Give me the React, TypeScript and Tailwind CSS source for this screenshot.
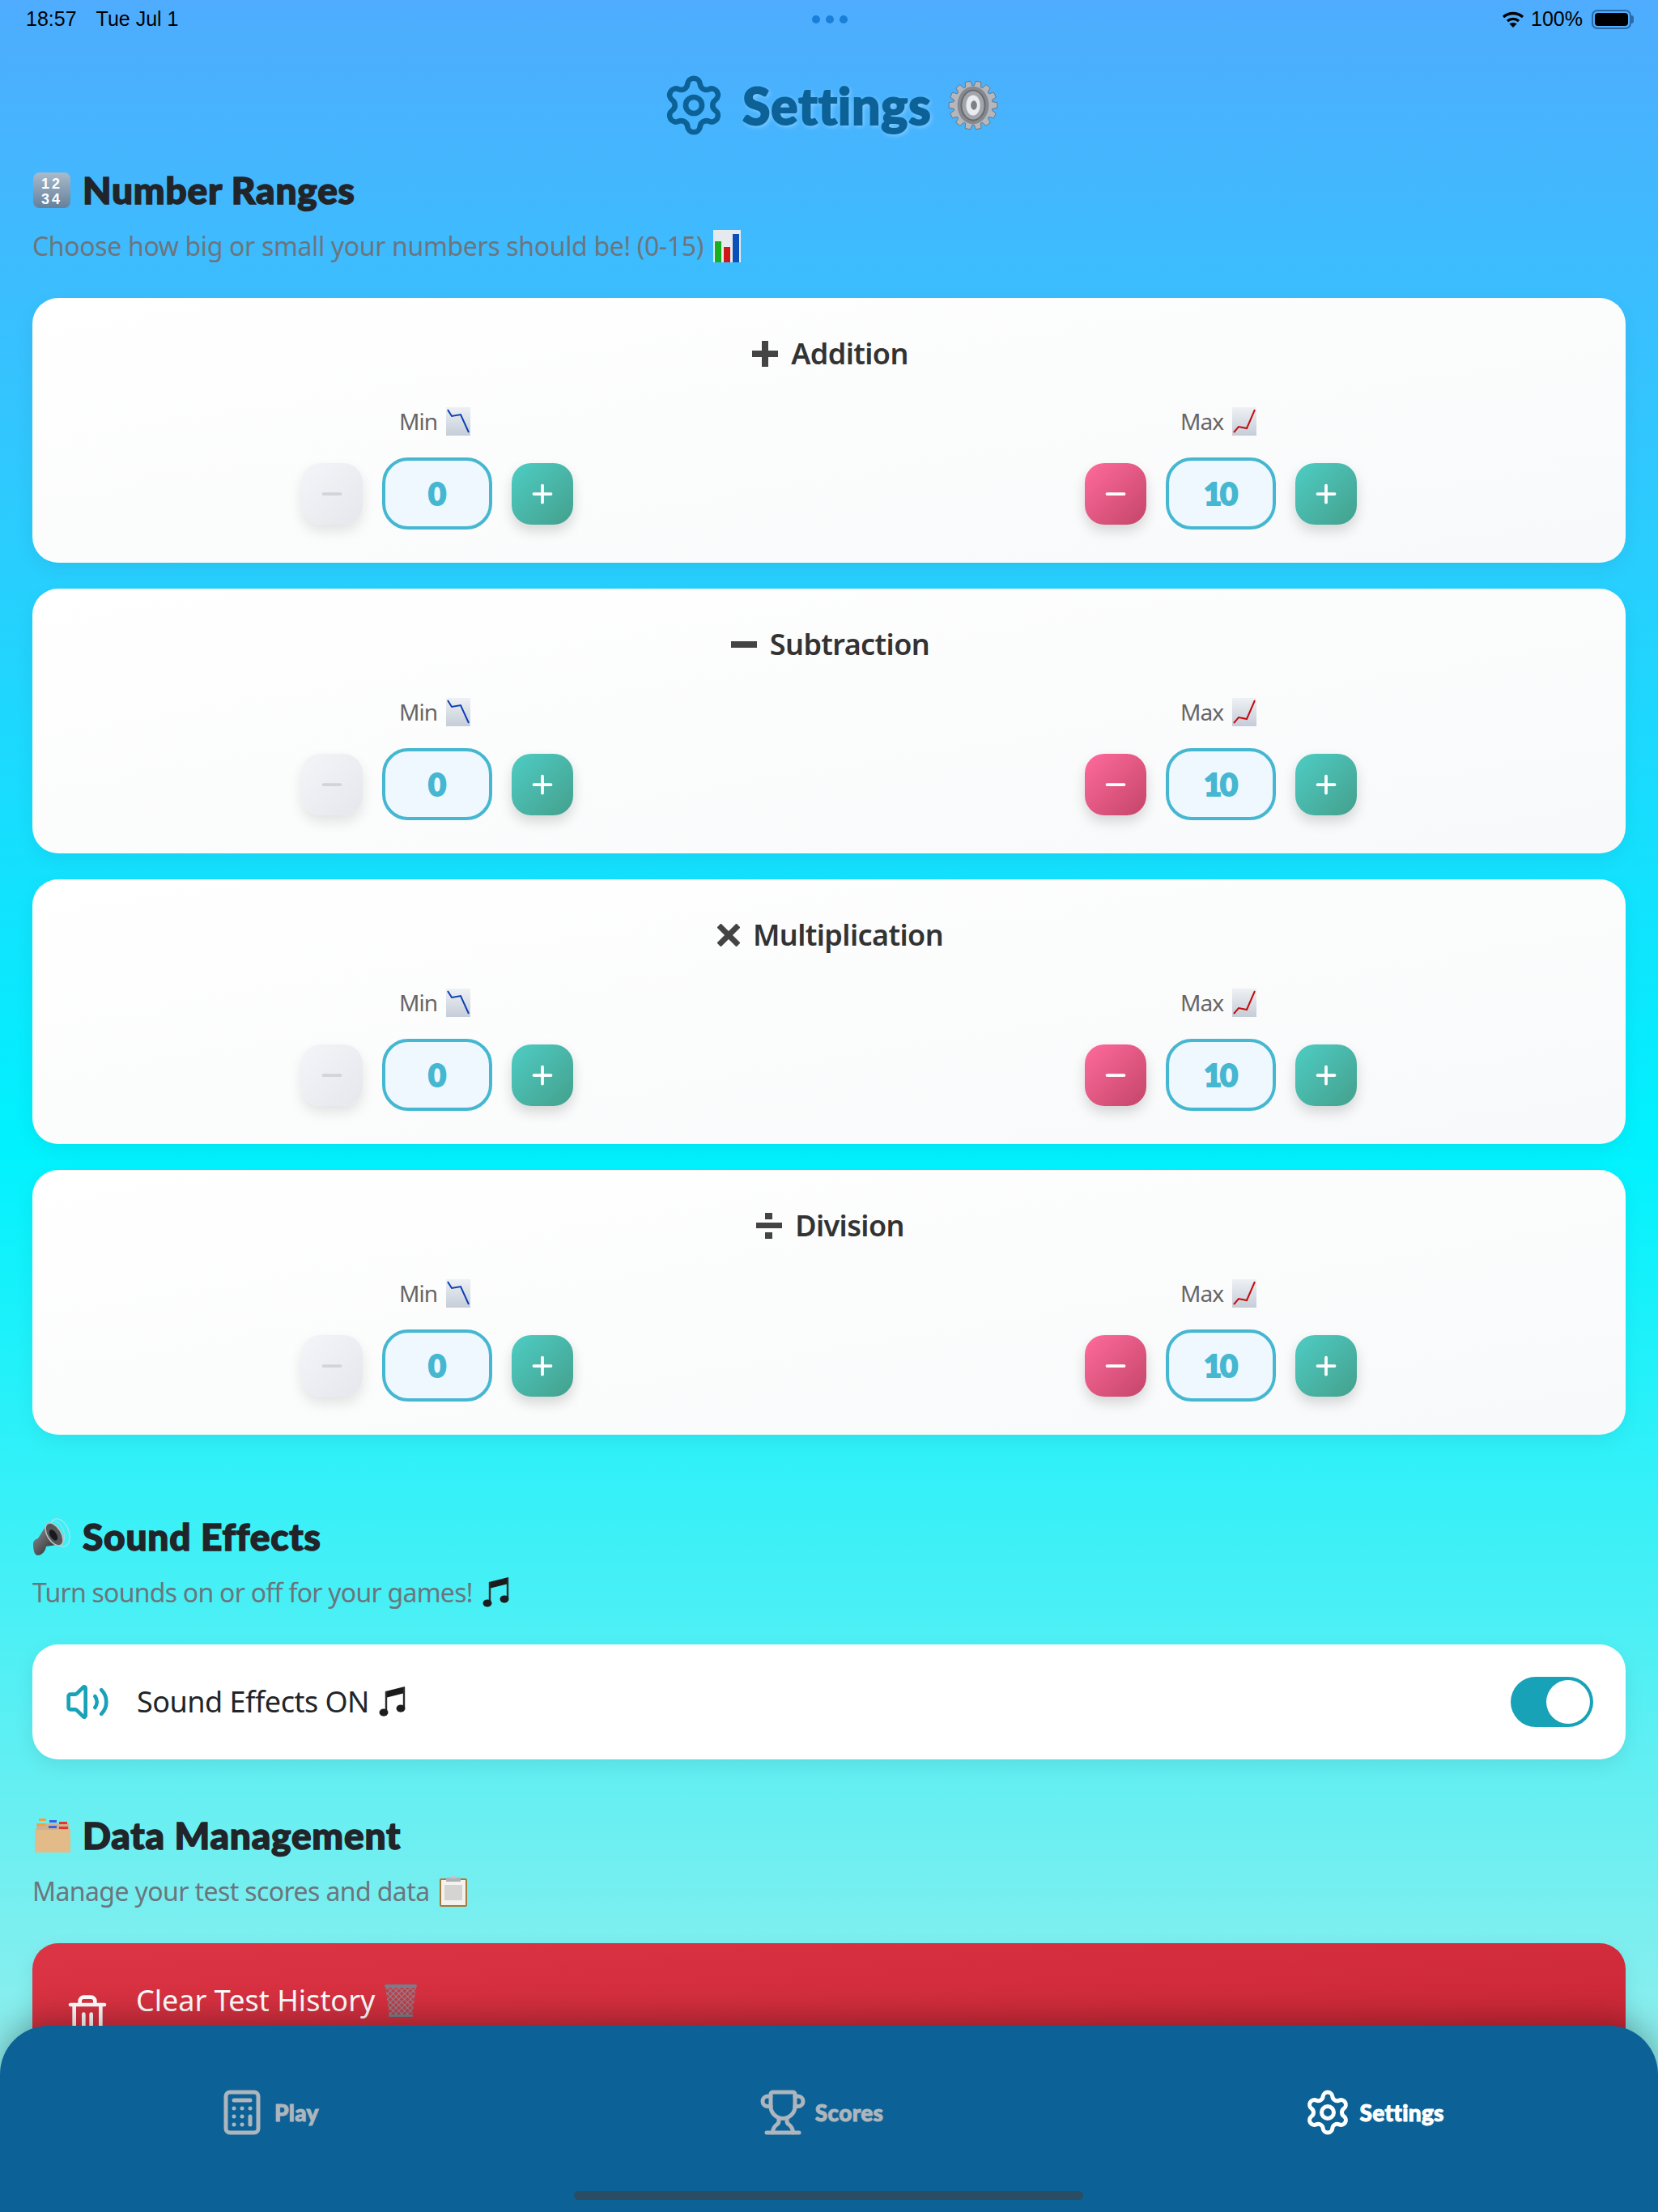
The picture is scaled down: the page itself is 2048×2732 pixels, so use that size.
import React from 'react';
import { Calculator, Minus, Plus, Settings, Trash2, Trophy, Volume2 } from 'lucide-react';

const headingFont = "font-['Lato','Inter',sans-serif] font-black";
const bodyFont = "font-['Noto_Sans','Open_Sans',sans-serif]";

// hand drawn stand-ins for the Apple emoji, there is no emoji font here
const KeycapEmoji = () => (
  <svg width="48" height="46" viewBox="0 0 48 46">
    <defs>
      <linearGradient id="keycap" x1="0" y1="0" x2="0" y2="1">
        <stop offset="0" stopColor="#a9bacb" />
        <stop offset="1" stopColor="#64809c" />
      </linearGradient>
    </defs>
    <rect x="1" y="1" width="46" height="44" rx="8" fill="url(#keycap)" />
    <text x="24" y="21" textAnchor="middle" fontSize="18" fill="#fff" letterSpacing="3" fontFamily="Liberation Sans">12</text>
    <text x="24" y="40" textAnchor="middle" fontSize="18" fill="#fff" letterSpacing="3" fontFamily="Liberation Sans">34</text>
  </svg>
);

const BarChartEmoji = () => (
  <svg width="34" height="40" viewBox="0 0 34 40">
    <rect width="34" height="40" fill="#e6eaee" />
    <rect x="2" y="14" width="8" height="26" fill="#17b01e" />
    <rect x="13" y="21" width="8" height="19" fill="#d01818" />
    <rect x="24" y="5" width="8" height="35" fill="#0b4fb8" />
  </svg>
);

const gearPoints = Array.from({ length: 14 }, (_, i) => {
  const a = (i / 14) * Math.PI * 2;
  const w = 0.11;
  const p = (r: number, t: number) => `${(32 + r * Math.cos(t)).toFixed(1)},${(32 + r * Math.sin(t)).toFixed(1)}`;
  return [p(25, a - w * 1.6), p(31, a - w), p(31, a + w), p(25, a + w * 1.6)].join(' ');
}).join(' ');

const GearEmoji = () => (
  <svg width="62" height="64" viewBox="0 0 64 64">
    <polygon points={gearPoints} fill="#b4b8be" stroke="#6a6560" strokeWidth="0.8" />
    <ellipse cx="32" cy="32" rx="20" ry="24" fill="#85888e" />
    <ellipse cx="32" cy="32" rx="15" ry="19" fill="#a2a5aa" stroke="#66696e" strokeWidth="2" />
    <ellipse cx="32" cy="32" rx="9" ry="13" fill="#e8ecf0" />
    <ellipse cx="33" cy="32" rx="4" ry="6" fill="#7f7f86" />
  </svg>
);

const ChartDownEmoji = () => (
  <svg width="30" height="35" viewBox="0 0 30 35">
    <defs>
      <linearGradient id="chartDown" x1="0" y1="0" x2="0" y2="1">
        <stop offset="0" stopColor="#eef1f4" />
        <stop offset="1" stopColor="#c5cdd8" />
      </linearGradient>
    </defs>
    <rect width="30" height="35" fill="url(#chartDown)" />
    <path d="M2 3 L7 11 L18 9 L28 31" fill="none" stroke="#0b3fb5" strokeWidth="2" />
  </svg>
);

const ChartUpEmoji = () => (
  <svg width="30" height="35" viewBox="0 0 30 35">
    <defs>
      <linearGradient id="chartUp" x1="0" y1="0" x2="0" y2="1">
        <stop offset="0" stopColor="#eef1f4" />
        <stop offset="1" stopColor="#c5cdd8" />
      </linearGradient>
    </defs>
    <rect width="30" height="35" fill="url(#chartUp)" />
    <path d="M2 31 L8 24 L18 26 L28 3" fill="none" stroke="#c40c0c" strokeWidth="2" />
  </svg>
);

const SpeakerEmoji = () => (
  <svg width="48" height="48" viewBox="0 0 48 48">
    <defs>
      <linearGradient id="speaker" x1="0" y1="0" x2="1" y2="1">
        <stop offset="0" stopColor="#9a9da0" />
        <stop offset="1" stopColor="#141517" />
      </linearGradient>
    </defs>
    <ellipse cx="30" cy="19" rx="9" ry="15" transform="rotate(-20 30 19)" fill="none" stroke="#a4dbe2" strokeWidth="1" />
    <ellipse cx="34" cy="19" rx="11" ry="18" transform="rotate(-20 34 19)" fill="none" stroke="#b6e4e9" strokeWidth="1" />
    <path d="M1 33 C1 29 4 27 7 26 L19 7 L36 33 L17 36 C16 42 12 47 6 47 C2 46 1 39 1 33 Z" fill="url(#speaker)" />
    <ellipse cx="27" cy="21" rx="8.5" ry="15.5" transform="rotate(-32 27 21)" fill="#55585b" stroke="#c0c3c6" strokeWidth="1.5" />
    <ellipse cx="26" cy="22" rx="4" ry="7.5" transform="rotate(-32 26 22)" fill="#191a1e" />
  </svg>
);

const NotesEmoji = ({ size = 34 }: { size?: number }) => (
  <svg width={size} height={size * 1.15} viewBox="0 0 34 39">
    <path d="M8 7 L32 1 L32 9 L8 15 Z" fill="#1c1a1c" />
    <path d="M9 7 L9 32 M31 2 L31 27" stroke="#2b2a2c" strokeWidth="2.4" fill="none" />
    <ellipse cx="6" cy="33" rx="5.5" ry="4.6" fill="#1d1c1f" />
    <ellipse cx="27" cy="28" rx="5.5" ry="4.6" fill="#1d1c1f" />
  </svg>
);

const FileBoxEmoji = () => (
  <svg width="48" height="42" viewBox="-3 0 48 42">
    <rect x="0" y="13" width="44" height="29" fill="#e2bb88" />
    <rect x="2" y="6" width="40" height="8" fill="#cdb190" />
    <rect x="5" y="0" width="9" height="3" fill="#f2a23c" />
    <rect x="18" y="2" width="9" height="3" fill="#3d5ee0" />
    <rect x="30" y="4" width="10" height="3" fill="#e8352c" />
    <rect x="3" y="6" width="10" height="3" fill="#f2a23c" />
    <rect x="17" y="9" width="10" height="3" fill="#3d5ee0" />
    <rect x="30" y="10" width="11" height="3" fill="#e8352c" />
  </svg>
);

const ClipboardEmoji = () => (
  <svg width="34" height="38" viewBox="0 0 34 38">
    <rect x="0" y="3" width="34" height="35" rx="2" fill="#a67a38" />
    <rect x="2" y="5" width="30" height="31" fill="#f4f2ee" />
    <rect x="6" y="11" width="22" height="19" fill="#d6d4d2" />
    <rect x="8" y="2" width="18" height="5" fill="#aeb2b8" />
    <rect x="14" y="0" width="6" height="3" fill="#c2c5ca" />
  </svg>
);

const WastebasketEmoji = () => (
  <svg width="40" height="40" viewBox="0 0 40 40">
    <defs>
      <pattern id="mesh" width="5" height="5" patternUnits="userSpaceOnUse" patternTransform="rotate(45)">
        <rect width="5" height="5" fill="#b9434f" />
        <path d="M0 0 H5 M0 0 V5" stroke="#8f9aa6" strokeWidth="1.4" />
      </pattern>
    </defs>
    <path d="M1 3 H39 L34 39 H6 Z" fill="url(#mesh)" />
    <rect x="0" y="0" width="40" height="4" rx="2" fill="#75808c" />
    <rect x="5" y="37" width="30" height="3" rx="1.5" fill="#75808c" />
  </svg>
);

const PlusGlyph = () => (
  <svg width="32" height="32" viewBox="0 0 32 32" fill="#444">
    <rect x="12" y="0" width="8" height="32" />
    <rect x="0" y="12" width="32" height="8" />
  </svg>
);

const MinusGlyph = () => (
  <svg width="32" height="32" viewBox="0 0 32 32" fill="#444">
    <rect x="0" y="12" width="32" height="8" />
  </svg>
);

const TimesGlyph = () => (
  <svg width="28" height="28" viewBox="0 0 28 28" fill="#444">
    <rect x="10.5" y="-3" width="7" height="34" transform="rotate(45 14 14)" />
    <rect x="10.5" y="-3" width="7" height="34" transform="rotate(-45 14 14)" />
  </svg>
);

const DivideGlyph = () => (
  <svg width="32" height="32" viewBox="0 0 32 32" fill="#444">
    <rect x="11" y="0" width="9" height="8" />
    <rect x="0" y="12" width="32" height="7" />
    <rect x="11" y="24" width="9" height="8" />
  </svg>
);

const WifiIcon = () => (
  <svg width="28" height="20" viewBox="0 0 28 20" fill="none" stroke="#000" strokeWidth="3.4">
    <path d="M2 7 C9 1 19 1 26 7" />
    <path d="M7 12 C11 8.5 17 8.5 21 12" />
    <path d="M14 20 L9.5 15.5 C12 13.5 16 13.5 18.5 15.5 Z" fill="#000" stroke="none" />
  </svg>
);

const Stepper = ({ value, canDecrease }: { value: number; canDecrease: boolean }) => (
  <div className="flex items-center gap-6">
    <button
      className={
        canDecrease
          ? 'flex h-[76px] w-[76px] items-center justify-center rounded-3xl bg-gradient-to-br from-[#ff6b9d] to-[#c44569] text-white shadow-[0_8px_16px_rgba(0,0,0,0.15)]'
          : 'flex h-[76px] w-[76px] items-center justify-center rounded-3xl bg-gradient-to-br from-[#f4f5f9] to-[#e5e7ec] text-[#d1d4da] shadow-[0_8px_16px_rgba(0,0,0,0.1)]'
      }
    >
      <Minus size={36} strokeWidth={2.5} />
    </button>
    <div className={`flex h-[89px] w-[136px] items-center justify-center rounded-[32px] border-4 border-[#45b7d1] bg-[#f0f8ff] pr-[2px] text-[38px] tracking-[-2px] text-[#45b7d1] [-webkit-text-stroke:2px_#45b7d1] ${headingFont}`}>
      {value}
    </div>
    <button className="flex h-[76px] w-[76px] items-center justify-center rounded-3xl bg-gradient-to-br from-[#4ecdc4] to-[#44a08d] text-white shadow-[0_8px_16px_rgba(0,0,0,0.15)]">
      <Plus size={36} strokeWidth={2.5} />
    </button>
  </div>
);

const RangeField = ({ label, emoji, value, canDecrease }: { label: string; emoji: React.ReactNode; value: number; canDecrease: boolean }) => (
  <div className="flex flex-col items-center gap-[27px]">
    <div className="flex h-[36px] items-center gap-[11px] pr-[6px] text-[28px] tracking-[-1px] text-[#666]">
      {label} {emoji}
    </div>
    <Stepper value={value} canDecrease={canDecrease} />
  </div>
);

const operations = [
  { label: 'Addition', icon: <PlusGlyph /> },
  { label: 'Subtraction', icon: <MinusGlyph /> },
  { label: 'Multiplication', icon: <TimesGlyph /> },
  { label: 'Division', icon: <DivideGlyph /> },
];

const RangeCard = ({ label, icon }: { label: string; icon: React.ReactNode }) => (
  <div className="h-[327px] rounded-[32px] bg-gradient-to-br from-white to-[#f8f9fa] px-4 pt-[46px] shadow-[0_8px_24px_rgba(0,0,0,0.06)]">
    <div className="mb-[42px] flex h-[46px] items-center justify-center gap-4 pl-[3px] text-[36px] font-semibold tracking-[-0.6px] text-[#333]">
      {icon}
      {label}
    </div>
    <div className="flex justify-around">
      <RangeField label="Min" emoji={<ChartDownEmoji />} value={0} canDecrease={false} />
      <RangeField label="Max" emoji={<ChartUpEmoji />} value={10} canDecrease />
    </div>
  </div>
);

const SectionHeader = ({ emoji, title, subtitle, subEmoji, subClass }: { emoji: React.ReactNode; title: string; subtitle: string; subEmoji: React.ReactNode; subClass: string }) => (
  <div className="mb-[42px]">
    <h2 className={`flex h-[60px] items-center gap-[14px] pb-[3px] text-[46px] tracking-[0.8px] text-[#212529] [-webkit-text-stroke:1.5px_#212529] ${headingFont}`}>
      {emoji}
      {title}
    </h2>
    <p className={`mt-4 flex h-[44px] items-center gap-3 text-[32px] text-[#6c757d] ${subClass}`}>
      {subtitle} {subEmoji}
    </p>
  </div>
);

const NavItem = ({ icon, label, active }: { icon: React.ReactNode; label: string; active?: boolean }) => (
  <div className={`flex flex-1 items-center justify-center gap-[10px] ${active ? 'text-white' : 'text-[#adb5bd]'}`}>
    {icon}
    <span className={`text-[28px] tracking-[0.3px] [-webkit-text-stroke:1px_currentColor] ${headingFont}`}>{label}</span>
  </div>
);

const App: React.FC = () => {
  return (
    <div className={`relative h-[2732px] w-[2048px] overflow-hidden bg-[linear-gradient(180deg,#4facfe_0%,#00f2fe_52%,#a8edea_100%)] ${bodyFont}`}>
      {/* status bar */}
      <div className="flex h-[48px] items-center justify-between pl-8 pr-[30px] font-['Liberation_Sans',sans-serif] text-[25px] text-black">
        <div className="flex w-[400px] gap-[24px]">
          <span>18:57</span>
          <span>Tue Jul 1</span>
        </div>
        <div className="flex gap-[7px]">
          <span className="h-[10px] w-[10px] rounded-full bg-[#1a7fd8]" />
          <span className="h-[10px] w-[10px] rounded-full bg-[#1a7fd8]" />
          <span className="h-[10px] w-[10px] rounded-full bg-[#1a7fd8]" />
        </div>
        <div className="flex w-[400px] items-center justify-end gap-2">
          <WifiIcon />
          <span>100%</span>
          <div className="ml-[3px] flex items-center">
            <div className="h-[24px] w-[49px] rounded-[7px] border-2 border-[#2a6aa8] p-[2px]">
              <div className="h-full w-full rounded-[4px] bg-black" />
            </div>
            <div className="h-[10px] w-[3px] rounded-r bg-[#2a6aa8]" />
          </div>
        </div>
      </div>

      {/* page title */}
      <div className="mt-[34px] flex h-[96px] items-center justify-center gap-[20px] pl-[2px]">
        <Settings size={80} strokeWidth={2} className="text-[#0c6297]" />
        <h1 className={`text-[62px] tracking-[1px] text-[#0c6297] [-webkit-text-stroke:2px_#0c6297] [text-shadow:2px_2px_6px_rgba(255,255,255,0.4)] ${headingFont}`}>Settings</h1>
        <GearEmoji />
      </div>

      <main className="px-10 pt-[28px]">
        <SectionHeader emoji={<KeycapEmoji />} title="Number Ranges" subtitle="Choose how big or small your numbers should be! (0-15)" subEmoji={<BarChartEmoji />} subClass="tracking-[-0.35px]" />
        <div className="flex flex-col gap-8">
          {operations.map((op) => (
            <RangeCard key={op.label} label={op.label} icon={op.icon} />
          ))}
        </div>

        <div className="mt-[97px]">
          <SectionHeader emoji={<SpeakerEmoji />} title="Sound Effects" subtitle="Turn sounds on or off for your games!" subEmoji={<NotesEmoji />} subClass="tracking-[-0.75px]" />
          <div className="flex h-[142px] items-center justify-between rounded-[32px] bg-white pl-[40px] pr-[40px] shadow-[0_8px_24px_rgba(0,0,0,0.08)]">
            <div className="flex items-center gap-[33px] text-[36px] tracking-[-0.5px] text-[#212529]">
              <Volume2 size={56} strokeWidth={2} className="text-[#17a2b8]" />
              <span className="flex items-center gap-3">
                Sound Effects ON <NotesEmoji />
              </span>
            </div>
            <div className="flex h-[62px] w-[102px] justify-end rounded-full bg-[#17a2b8] p-[4px]">
              <div className="h-[54px] w-[54px] rounded-full bg-white" />
            </div>
          </div>
        </div>

        <div className="mt-[65px]">
          <SectionHeader emoji={<FileBoxEmoji />} title="Data Management" subtitle="Manage your test scores and data" subEmoji={<ClipboardEmoji />} subClass="tracking-[-0.6px]" />
          <div className="flex h-[180px] items-center gap-[32px] rounded-[32px] bg-gradient-to-br from-[#dc3545] to-[#c82333] pl-[40px] text-[36px] text-white shadow-[0_8px_24px_rgba(0,0,0,0.08)]">
            <Trash2 size={56} strokeWidth={2} />
            <span className="mb-[38px] flex items-center gap-3">
              Clear Test History <WastebasketEmoji />
            </span>
          </div>
        </div>
      </main>

      {/* tab bar sits over the scrolling content */}
      <nav className="absolute inset-x-0 bottom-0 h-[230px] rounded-t-[60px] bg-[#0c6297] shadow-[0_-8px_40px_rgba(0,0,0,0.3)]">
        <div className="ml-[-10px] mr-[10px] flex h-[214px] items-center">
          <NavItem icon={<Calculator size={60} strokeWidth={2} />} label="Play" />
          <NavItem icon={<Trophy size={60} strokeWidth={2} />} label="Scores" />
          <NavItem icon={<Settings size={60} strokeWidth={2} />} label="Settings" active />
        </div>
        <div className="absolute bottom-[15px] left-[709px] h-[11px] w-[629px] rounded-full bg-[#2a4d63]" />
      </nav>
    </div>
  );
};

export default App;
